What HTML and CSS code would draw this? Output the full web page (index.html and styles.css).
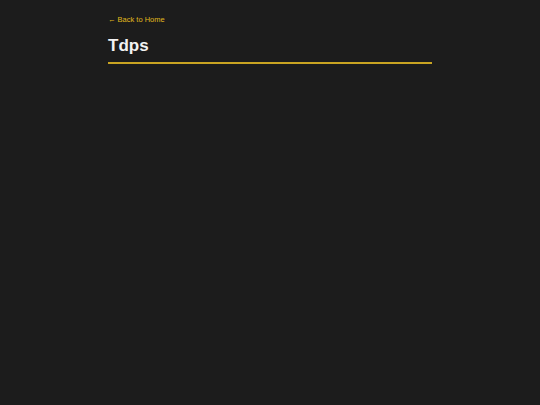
FILE: index.html
```html
<!DOCTYPE html>
<html lang="en">
<head>
    <meta charset="UTF-8">
    <meta name="viewport" content="width=device-width, initial-scale=1.0">
    <title>Tdps</title>
    <link rel="stylesheet" href="styles.css">
</head>
<body>
    <div class="page-container">
        <a class="back-link" href="#">&larr; Back to Home</a>
        <h1 class="page-title">Tdps</h1>
    </div>
</body>
</html>
```

FILE: styles.css
```css
body {
    font-family: "Liberation Sans", Arial, sans-serif;
    background-color: #1c1c1c;
    color: #f0f0f0;
    margin: 0;
    padding: 8px 0 0;
}

.page-container {
    width: 60%;
    margin: 0 auto;
}

.back-link {
    display: inline-block;
    color: #e0b81c;
    font-size: 7.5px;
    text-decoration: none;
}

.page-title {
    margin: 10px 0 0;
    padding-bottom: 6px;
    font-size: 17px;
    font-weight: bold;
    color: #f2f2f2;
    border-bottom: 2px solid #c9a422;
}
```
